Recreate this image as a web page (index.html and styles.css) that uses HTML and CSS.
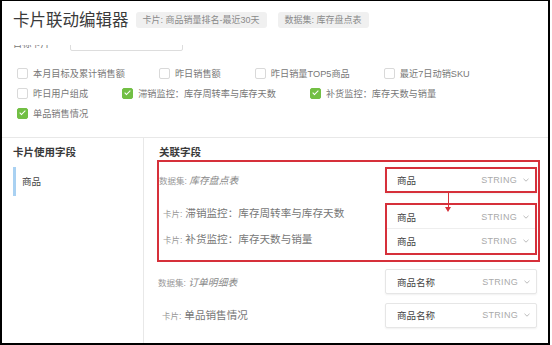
FILE: index.html
```html
<!DOCTYPE html>
<html lang="zh-CN">
<head>
  <meta charset="UTF-8" />
  <title>卡片联动编辑器</title>
  <link rel="stylesheet" href="styles.css">
</head>
<body>
  <div class="frame">
    <header class="head">
      <h1 class="title">卡片联动编辑器</h1>
      <span class="tag">卡片: 商品销量排名-最近30天</span>
      <span class="tag">数据集: 库存盘点表</span>
    </header>

    <div class="config">
      <div class="target-row">
        <label class="target-label">目标卡片</label>
        <div class="input"></div>
      </div>
      <div class="checks">
        <label class="check"><span class="box"></span>本月目标及累计销售额</label>
        <label class="check"><span class="box"></span>昨日销售额</label>
        <label class="check"><span class="box"></span>昨日销量TOP5商品</label>
        <label class="check"><span class="box"></span>最近7日动销SKU</label>
        <label class="check"><span class="box"></span>昨日用户组成</label>
        <label class="check"><span class="box on"></span>滞销监控：库存周转率与库存天数</label>
        <label class="check"><span class="box on"></span>补货监控：库存天数与销量</label>
        <label class="check"><span class="box on"></span>单品销售情况</label>
      </div>
    </div>

    <div class="fields">
      <aside class="used">
        <h3 class="sub">卡片使用字段</h3>
        <div class="used-item">商品</div>
      </aside>

      <section class="links">
        <h3 class="sub">关联字段</h3>

        <div class="link-group">
          <div class="link-row">
            <div class="src"><span class="kind">数据集:</span> <em>库存盘点表</em></div>
            <div class="select hl">
              <span class="name">商品</span><span class="type">STRING</span>
              <svg class="caret" width="6" height="4" viewBox="0 0 6 4"><path d="M0.5 0.8L3 3.2L5.5 0.8" fill="none" stroke="#bbb" stroke-width="1"/></svg>
            </div>
          </div>
          <div class="cards">
            <div class="card-labels">
              <div class="card"><span class="kind">卡片:</span> 滞销监控：库存周转率与库存天数</div>
              <div class="card"><span class="kind">卡片:</span> 补货监控：库存天数与销量</div>
            </div>
            <div class="stack">
              <div class="select">
                <span class="name">商品</span><span class="type">STRING</span>
                <svg class="caret" width="6" height="4" viewBox="0 0 6 4"><path d="M0.5 0.8L3 3.2L5.5 0.8" fill="none" stroke="#bbb" stroke-width="1"/></svg>
              </div>
              <div class="select">
                <span class="name">商品</span><span class="type">STRING</span>
                <svg class="caret" width="6" height="4" viewBox="0 0 6 4"><path d="M0.5 0.8L3 3.2L5.5 0.8" fill="none" stroke="#bbb" stroke-width="1"/></svg>
              </div>
            </div>
          </div>
          <span class="arrow"></span>
        </div>

        <div class="link-row plain">
          <div class="src"><span class="kind">数据集:</span> <em>订单明细表</em></div>
          <div class="select">
            <span class="name">商品名称</span><span class="type">STRING</span>
            <svg class="caret" width="6" height="4" viewBox="0 0 6 4"><path d="M0.5 0.8L3 3.2L5.5 0.8" fill="none" stroke="#bbb" stroke-width="1"/></svg>
          </div>
        </div>
        <div class="link-row plain gap">
          <div class="card"><span class="kind">卡片:</span> 单品销售情况</div>
          <div class="select">
            <span class="name">商品名称</span><span class="type">STRING</span>
            <svg class="caret" width="6" height="4" viewBox="0 0 6 4"><path d="M0.5 0.8L3 3.2L5.5 0.8" fill="none" stroke="#bbb" stroke-width="1"/></svg>
          </div>
        </div>
      </section>
    </div>
  </div>
</body>
</html>
```

FILE: styles.css
```css
body {
  margin: 0;
  background: #fff;
  font-family: "Liberation Sans", "Noto Sans CJK SC", sans-serif;
}
.frame {
  width: 550px;
  height: 345px;
  box-sizing: border-box;
  border: 2px solid #000;
  border-top-width: 1px;
  overflow: hidden;
  display: flex;
  flex-direction: column;
}
.head {
  flex: none;
  height: 44px;
  box-sizing: border-box;
  padding: 8px 0 0 11px;
  display: flex;
  align-items: flex-start;
  background: #fff;
}
.title {
  margin: 0 7px 0 0;
  font-size: 16.5px;
  line-height: 22px;
  font-weight: normal;
  color: #3a3a3a;
}
.tag {
  margin: 3px 11px 0 0;
  height: 16px;
  line-height: 16px;
  padding: 0 7px;
  font-size: 9px;
  color: #8a8a8a;
  background: #f0f0f0;
  border-radius: 3px;
}
.config {
  flex: none;
  overflow: hidden;
  padding-bottom: 14px;
  border-bottom: 1px solid #e8e8e8;
}
.target-row {
  display: flex;
  height: 22px;
  margin-top: -16px;
  padding-left: 11px;
}
.target-label {
  width: 57px;
  align-self: flex-end;
  margin-bottom: 1px;
  font-size: 9.2px;
  line-height: 12px;
  color: #777;
}
.input {
  width: 113px;
  height: 22px;
  box-sizing: border-box;
  border: 1px solid #ddd;
  border-radius: 2px;
}
.checks {
  display: flex;
  flex-wrap: wrap;
  margin-top: 12px;
  padding: 0 40px 0 15px;
}
.check {
  display: flex;
  align-items: center;
  height: 20px;
  margin-right: 34px;
  font-size: 9.2px;
  color: #777;
}
.box {
  width: 11px;
  height: 11px;
  box-sizing: border-box;
  border: 1px solid #d9d9d9;
  border-radius: 2px;
  margin-right: 5px;
  display: flex;
  align-items: center;
  justify-content: center;
}
.box.on {
  background: #72bf44;
  border-color: #72bf44;
}
.box.on::after {
  content: "";
  width: 2px;
  height: 5px;
  border: solid #fff;
  border-width: 0 1.5px 1.5px 0;
  transform: translateY(-1px) rotate(45deg);
}
.fields {
  flex: 1;
  display: flex;
  min-height: 0;
}
.used {
  flex: none;
  width: 142px;
  box-sizing: border-box;
  padding-left: 11px;
  border-right: 1px solid #e8e8e8;
}
.sub {
  margin: 0;
  padding-top: 6px;
  font-size: 10.5px;
  line-height: 16px;
  font-weight: bold;
  color: #3a3a3a;
}
.used-item {
  margin-top: 7px;
  height: 29px;
  line-height: 29px;
  border-left: 3px solid #a9d1f2;
  padding-left: 6px;
  font-size: 9.5px;
  color: #444;
}
.links {
  flex: 1;
  padding: 0 8px 0 13px;
}
.links .sub {
  margin-left: 2px;
}
.link-group {
  position: relative;
  border: 2px solid #d6303a;
  padding: 5px 1px 5px 0;
}
.link-row {
  display: flex;
  align-items: center;
}
.link-row.plain {
  margin-top: 7px;
  padding: 0 3px 0 1px;
}
.link-row.gap {
  margin-top: 8px;
}
.src {
  flex: 1;
  font-size: 8.5px;
  color: #888;
}
.src em {
  font-size: 9.8px;
}
.kind {
  font-size: 8.5px;
  color: #999;
}
.card {
  flex: 1;
  height: 26px;
  line-height: 26px;
  padding-left: 4px;
  font-size: 10.6px;
  color: #777;
}
.select {
  flex: none;
  width: 152px;
  height: 25px;
  box-sizing: border-box;
  border: 1px solid #e6e6e6;
  border-radius: 2px;
  box-shadow: 0 1px 2px rgba(0, 0, 0, 0.06);
  display: flex;
  align-items: center;
  padding: 0 6px 0 11px;
}
.select.hl {
  height: 26px;
  border: 2px solid #d6303a;
  border-radius: 0;
  padding-left: 10px;
}
.name {
  flex: 1;
  font-size: 9.5px;
  color: #444;
}
.type {
  font-size: 9px;
  letter-spacing: 0.3px;
  color: #aaa;
}
.caret {
  margin-left: 6px;
}
.cards {
  display: flex;
  margin-top: 10px;
}
.card-labels {
  flex: 1;
  margin-top: -3px;
}
.stack {
  flex: none;
  width: 152px;
  box-sizing: border-box;
  border: 2px solid #d6303a;
}
.stack .select {
  width: auto;
  height: 24px;
  border: none;
  border-radius: 0;
  box-shadow: none;
  padding-left: 10px;
}
.stack .select:first-child {
  border-bottom: 1px solid #eee;
}
.arrow {
  position: absolute;
  left: 289px;
  top: 31px;
  width: 1px;
  height: 15px;
  background: #d6303a;
}
.arrow::after {
  content: "";
  position: absolute;
  left: -3px;
  top: 14px;
  border-left: 3.5px solid transparent;
  border-right: 3.5px solid transparent;
  border-top: 5px solid #d6303a;
}
```
